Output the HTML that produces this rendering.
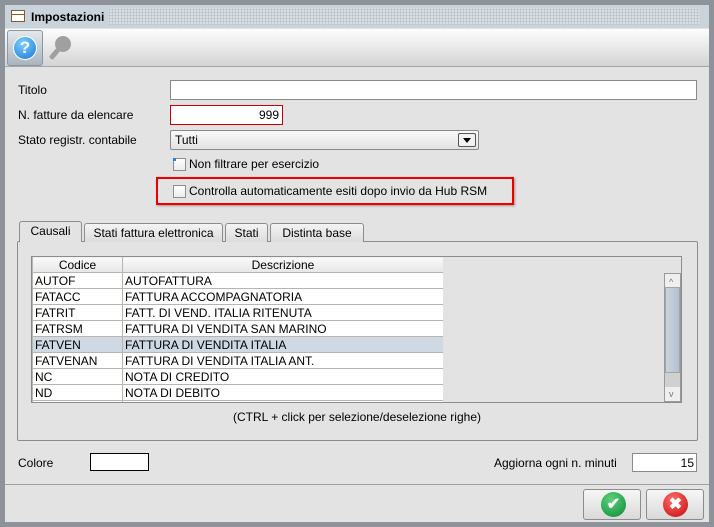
<!DOCTYPE html>
<html><head><meta charset="utf-8"><style>
*{box-sizing:border-box;margin:0;padding:0}
body{width:714px;height:527px;background:#8d9398;font-family:"Liberation Sans",Arial,sans-serif;font-size:12px;color:#000;position:relative;overflow:hidden}
.a{position:absolute}
.inp{position:absolute;background:#fff;border:1px solid #8a8a8a}
.lbl{position:absolute;line-height:14px}
.cb{position:absolute;width:13px;height:13px;background:linear-gradient(#fff,#ececec);border:1px solid #8f8f8f}
.tab{position:absolute;top:223px;height:19px;border:1px solid #8c8c8c;border-bottom:none;border-radius:3px 3px 0 0;background:linear-gradient(#f4f4f4,#dcdcdc);text-align:center;line-height:18px}
table{border-collapse:collapse;font-size:12px}
td{height:16px;border:1px solid #b9b5ae;padding:0 2px;line-height:14px;background:#fff}
th{height:16px;border:1px solid #b9b5ae;font-weight:normal;background:linear-gradient(#fafafa,#e6e6e6);line-height:14px}
.btn{position:absolute;top:489px;width:58px;height:31px;border:1px solid #8c8c8c;border-radius:3px;background:linear-gradient(#f7f7f7,#d9d9d9)}
</style></head><body>
<div class="a" style="left:5px;top:5px;width:704px;height:517px;background:#e3e3e3"></div>
<div class="a" style="left:5px;top:5px;width:704px;height:23px;background:#c9d3dc"></div>
<div class="a" style="left:108px;top:8px;width:592px;height:17px;background-image:radial-gradient(#b6bec6 45%,transparent 50%);background-size:3px 3px;background-color:#d6dde3"></div>
<div class="a" style="left:11px;top:10px;width:14px;height:12px;border:1px solid #8b5a2b;background:linear-gradient(#fff 0,#fff 3px,#8b5a2b 3px,#8b5a2b 4px,#fff 4px)"></div>
<div class="lbl" style="left:31px;top:10px;font-weight:bold;font-size:12px">Impostazioni</div>
<div class="a" style="left:5px;top:29px;width:704px;height:38px;background:linear-gradient(#fdfdfd,#d4d4d4);border-bottom:1px solid #a6a6a6"></div>
<div class="a" style="left:7px;top:30px;width:36px;height:36px;border:1px solid #8a96a0;border-radius:3px;background:linear-gradient(#e3e8ec,#a9b4bd)"></div>
<div class="a" style="left:13px;top:36px;width:24px;height:24px;border-radius:50%;background:radial-gradient(circle at 40% 30%,#7fd0ff,#1575d6);border:1px solid #fff;color:#fff;font-weight:bold;font-size:17px;text-align:center;line-height:22px">?</div>
<div class="a" style="left:55px;top:36px;width:16px;height:16px;border-radius:50%;background:#a0a0a0"></div>
<div class="a" style="left:52px;top:48px;width:5px;height:12px;background:#a0a0a0;transform:rotate(40deg);border-radius:2px"></div>
<div class="lbl" style="left:18px;top:83px">Titolo</div>
<div class="inp" style="left:170px;top:80px;width:527px;height:20px"></div>
<div class="lbl" style="left:18px;top:108px">N. fatture da elencare</div>
<div class="inp" style="left:170px;top:105px;width:113px;height:20px;border-color:#c00;text-align:right;padding:2px 3px;line-height:14px">999</div>
<div class="lbl" style="left:18px;top:133px">Stato registr. contabile</div>
<div class="a" style="left:170px;top:130px;width:309px;height:20px;border:1px solid #8a8a8a;border-radius:2px;background:linear-gradient(#fafafa,#e2e2e2);padding:2px 4px;line-height:14px">Tutti</div>
<div class="a" style="left:458px;top:133px;width:18px;height:14px;border:1px solid #555;border-radius:2px;background:#f2f2f2"></div>
<div class="a" style="left:463px;top:138px;width:0;height:0;border-left:4px solid transparent;border-right:4px solid transparent;border-top:5px solid #000"></div>
<div class="cb" style="left:173px;top:158px"></div>
<div class="a" style="left:173px;top:158px;width:3px;height:3px;background:#2a7de1"></div>
<div class="lbl" style="left:189px;top:157px">Non filtrare per esercizio</div>
<div class="a" style="left:156px;top:177px;width:358px;height:28px;border:2px solid #e00;box-shadow:1px 1px 2px #999"></div>
<div class="cb" style="left:173px;top:185px"></div>
<div class="lbl" style="left:189px;top:184px">Controlla automaticamente esiti dopo invio da Hub RSM</div>
<div class="a" style="left:17px;top:241px;width:681px;height:200px;border:1px solid #8c8c8c;border-radius:2px"></div>
<div class="tab" style="left:84px;width:139px">Stati fattura elettronica</div>
<div class="tab" style="left:225px;width:43px">Stati</div>
<div class="tab" style="left:270px;width:94px">Distinta base</div>
<div class="tab" style="left:19px;top:221px;width:63px;height:21px;background:#e3e3e3;border-color:#8c8c8c">Causali</div>
<div class="a" style="left:31px;top:256px;width:412px;height:146px;overflow:hidden;border-left:1px solid #888">
<table style="width:412px;margin-top:0"><tr><th style="width:90px">Codice</th><th>Descrizione</th></tr>
<tr><td>AUTOF</td><td>AUTOFATTURA</td></tr>
<tr><td>FATACC</td><td>FATTURA ACCOMPAGNATORIA</td></tr>
<tr><td>FATRIT</td><td>FATT. DI VEND. ITALIA RITENUTA</td></tr>
<tr><td>FATRSM</td><td>FATTURA DI VENDITA SAN MARINO</td></tr>
<tr><td style="background:#ced9e3">FATVEN</td><td style="background:#ced9e3">FATTURA DI VENDITA ITALIA</td></tr>
<tr><td>FATVENAN</td><td>FATTURA DI VENDITA ITALIA ANT.</td></tr>
<tr><td>NC</td><td>NOTA DI CREDITO</td></tr>
<tr><td>ND</td><td>NOTA DI DEBITO</td></tr>
<tr><td>&nbsp;</td><td></td></tr></table></div>
<div class="a" style="left:31px;top:256px;width:651px;height:147px;border:1px solid #8c8c8c;border-left:none"></div>
<div class="a" style="left:664px;top:273px;width:17px;height:129px;background:#efefef;border:1px solid #9a9a9a"></div>
<div class="a" style="left:665px;top:287px;width:15px;height:86px;background:linear-gradient(90deg,#c9d4de,#b4c1cc);border:1px solid #9aa6b0"></div>
<div class="a" style="left:665px;top:373px;width:15px;height:14px;background:#d0d0d0"></div>
<div class="a" style="left:669px;top:278px;font-size:9px;color:#777;line-height:8px">^</div>
<div class="a" style="left:669px;top:390px;font-size:9px;color:#777;line-height:8px">v</div>
<div class="lbl" style="left:0;top:410px;width:714px;text-align:center">(CTRL + click per selezione/deselezione righe)</div>
<div class="lbl" style="left:18px;top:456px">Colore</div>
<div class="a" style="left:90px;top:453px;width:59px;height:18px;background:#fff;border:1px solid #000"></div>
<div class="lbl" style="left:494px;top:456px">Aggiorna ogni n. minuti</div>
<div class="inp" style="left:632px;top:453px;width:65px;height:19px;text-align:right;padding:2px 2px;line-height:14px">15</div>
<div class="a" style="left:5px;top:484px;width:704px;height:38px;background:#e3e3e3;border-top:1px solid #a0a0a0"></div>
<div class="btn" style="left:583px"></div>
<div class="btn" style="left:646px"></div>
<div class="a" style="left:601px;top:492px;width:25px;height:25px;border-radius:50%;background:radial-gradient(circle at 40% 30%,#5fd07a,#0b8a34);color:#fff;font-weight:bold;font-size:16px;text-align:center;line-height:25px">✔</div>
<div class="a" style="left:663px;top:492px;width:25px;height:25px;border-radius:50%;background:radial-gradient(circle at 40% 30%,#ff6a6a,#c40d0d);color:#fff;font-weight:bold;font-size:16px;text-align:center;line-height:25px">✖</div>
</body></html>
